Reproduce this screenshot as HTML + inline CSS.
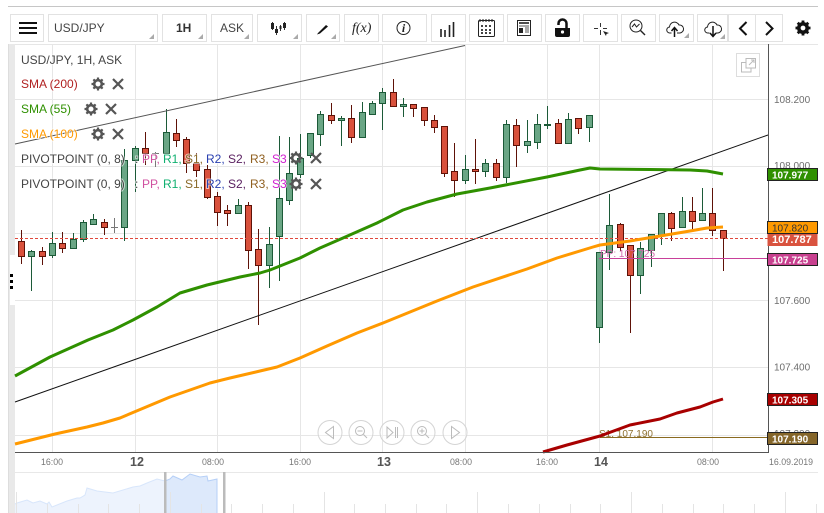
<!DOCTYPE html>
<html><head><meta charset="utf-8"><style>
html,body{margin:0;padding:0;background:#fff;width:824px;height:513px;overflow:hidden}
svg{display:block}
text{font-family:"Liberation Sans",sans-serif;font-size:12px}
.btn{fill:#fff;stroke:#e2e2e2;stroke-width:1}
.ax{fill:#6e6e6e;font-size:10px}
.v{font-size:10px}
.b{font-size:10px;font-weight:bold}
.lg{paint-order:stroke;stroke:#fff;stroke-width:2px;stroke-opacity:.6}
.xl{fill:#777;font-size:8.8px;text-anchor:middle}
.xb{fill:#555;font-size:12.5px;font-weight:bold;text-anchor:middle}
.nav{fill:#fff;fill-opacity:.35;stroke:#d4d4d4;stroke-width:1}
.ni{fill:none;stroke:#bbb;stroke-width:1}
.ma{fill:none;stroke-width:3;stroke-linejoin:round;stroke-linecap:butt}
</style></head><body>
<svg width="824" height="513" viewBox="0 0 824 513" xmlns="http://www.w3.org/2000/svg">
<rect width="824" height="513" fill="#fff"/>
<path d="M8 6.500H818" stroke="#c6c6c6" stroke-width="1"/>
<rect x="8" y="44" width="7" height="469" fill="#e9e9e9"/>
<rect x="10" y="255" width="5" height="50" fill="#fff"/>
<path d="M8.500 44V513" stroke="#ddd"/>
<rect x="10" y="274" width="3" height="3" fill="#000"/><rect x="10" y="280" width="3" height="3" fill="#000"/><rect x="10" y="286" width="3" height="3" fill="#000"/>
<path d="M15 44.500H818" stroke="#e6e6e6"/>
<path d="M52.500 44V452M135.500 44V452M217.500 44V452M300.500 44V452M382.500 44V452M465.500 44V452M547.500 44V452M599.500 44V452M712.500 44V452M15 99.500H768M15 166.500H768M15 233.500H768M15 300.500H768M15 367.500H768M15 435.500H768" stroke="#e6e6e6" stroke-width="1" fill="none"/>

<!-- green candles -->
<path stroke="#1c5a38" fill="none" d="M31.5 250V291M52.5 232V258M73.5 233V248M83.5 220V242M93.5 214V224M124.5 149V241M135.5 146V192M166.5 109V153M238.5 199V213M269.5 227V288M279.5 136V281M289.5 137V205M300.5 134V178M310.5 134V158M320.5 111V146M341.5 116V146M362.5 102V137M372.5 101V115M382.5 88V130M403.5 98V117M465.5 155V184M485.5 159V177M506.5 120V183M527.5 120V153M537.5 114V149M547.5 106V129M568.5 113V143M589.5 115V142M599.5 252V343M609.5 194V270M640.5 242V294M651.5 234V267M661.5 213V245M682.5 197V227M702.5 188V221"/>
<path stroke="#5e1208" fill="none" d="M21.5 230V264M42.5 247V265M62.5 232V253M104.5 219V235M145.5 132V165M176.5 119V147M186.5 137V173M196.5 153V177M207.5 165V199M217.5 192V226M227.5 205V226M248.5 202V269M258.5 229V325M331.5 103V124M351.5 105V143M393.5 79V107M413.5 104V117M424.5 107V126M434.5 115V133M444.5 126V177M454.5 143V197M475.5 139V184M496.5 159V181M516.5 119V167M558.5 119V143M578.5 118V134M620.5 223V251M630.5 245V333M671.5 212V241M692.5 197V229M712.5 188V236M723.5 230V271"/>
<path stroke="#777" fill="none" d="M114.5 218V233M111 227.5H118M155.5 152V167M152 153.5H159"/>
<path fill="#6aa685" stroke="#1c5a38" stroke-width="1" d="M28.5 251.5h6v5h-6zM49.5 243.5h6v12h-6zM70.5 239.5h6v9h-6zM80.5 222.5h6v17h-6zM90.5 219.5h6v5h-6zM121.5 160.5h6v67h-6zM132.5 148.5h6v12h-6zM163.5 132.5h6v21h-6zM235.5 205.5h6v8h-6zM266.5 244.5h6v21h-6zM276.5 198.5h6v38h-6zM286.5 173.5h6v27h-6zM297.5 158.5h6v16h-6zM307.5 133.5h6v22h-6zM317.5 114.5h6v20h-6zM338.5 118.5h6v2h-6zM359.5 112.5h6v25h-6zM369.5 103.5h6v11h-6zM379.5 92.5h6v11h-6zM400.5 104.5h6v2h-6zM462.5 169.5h6v11h-6zM482.5 163.5h6v8h-6zM503.5 124.5h6v53h-6zM524.5 141.5h6v4h-6zM534.5 124.5h6v18h-6zM544.5 124.5h6v1h-6zM565.5 119.5h6v24h-6zM586.5 115.5h6v12h-6zM596.5 252.5h6v75h-6zM606.5 225.5h6v27h-6zM637.5 248.5h6v27h-6zM648.5 234.5h6v16h-6zM658.5 213.5h6v22h-6zM679.5 211.5h6v16h-6zM699.5 213.5h6v7h-6z"/>
<path fill="#d9513c" stroke="#5e1208" stroke-width="1" d="M18.5 241.5h6v15h-6zM39.5 251.5h6v5h-6zM59.5 243.5h6v5h-6zM101.5 222.5h6v5h-6zM142.5 148.5h6v5h-6zM173.5 133.5h6v7h-6zM183.5 139.5h6v24h-6zM193.5 163.5h6v7h-6zM204.5 169.5h6v28h-6zM214.5 196.5h6v16h-6zM224.5 210.5h6v3h-6zM245.5 205.5h6v45h-6zM255.5 249.5h6v16h-6zM328.5 115.5h6v5h-6zM348.5 118.5h6v19h-6zM390.5 92.5h6v14h-6zM410.5 104.5h6v4h-6zM421.5 107.5h6v13h-6zM431.5 120.5h6v7h-6zM441.5 126.5h6v47h-6zM451.5 171.5h6v9h-6zM472.5 169.5h6v2h-6zM493.5 163.5h6v14h-6zM513.5 125.5h6v20h-6zM555.5 123.5h6v20h-6zM575.5 118.5h6v10h-6zM617.5 224.5h6v23h-6zM627.5 245.5h6v30h-6zM668.5 213.5h6v15h-6zM689.5 211.5h6v10h-6zM709.5 213.5h6v17h-6zM720.5 230.5h6v8h-6z"/>

<!-- trend lines -->
<path d="M15 144L465 45.500" stroke="#555" stroke-width="1" fill="none"/>
<path d="M15 402L768 135" stroke="#111" stroke-width="1" fill="none"/>
<!-- horizontal levels -->
<path d="M15 238.500H768" stroke="#e0483c" stroke-dasharray="3 2" fill="none"/>
<path d="M599 258.500H768" stroke="#c8409a" fill="none"/>
<path d="M600 437.500H768" stroke="#8a6a20" fill="none"/>
<text class="v" x="600" y="257" fill="#d466ac">PP: 107.725</text>
<text class="v" x="599" y="437" fill="#8f7233">S1: 107.190</text>
<!-- SMAs -->
<path class="ma" d="M15 376L50 357L88 340L113 330L133 320L157 307L180 293L207 285L240 277L260 273L270 270L280 266L300 258L320 248L343 238L377 223L403 210L427 202L457 194L490 188L547 177L580 170L590 168L600 169L650 169.500L690 170L707 171L723 174" stroke="#2f9000"/>
<path class="ma" d="M15 444L55 434L87 427L103 423L120 418L170 397L210 383L230 378L260 371L277 367L300 358L327 346L357 333L383 323L410 312L437 301L473 287L527 269L557 258L593 247L600 245L630 241L660 236L690 231L707 228L723 227" stroke="#ff9900"/>
<path class="ma" d="M543 452L567 445L600 436L630 425L660 419L677 413L700 407L713 402L723 399" stroke="#a80000"/>

<!-- frame axes -->
<path d="M15 452.500H769" stroke="#555"/>
<path d="M768.500 44V452" stroke="#555"/>
<path d="M15 472.500H818" stroke="#e8e8e8"/>

<!-- axis labels -->
<text class="ax" x="774" y="103">108.200</text>
<text class="ax" x="774" y="169">108.000</text>
<text class="ax" x="774" y="304">107.600</text>
<text class="ax" x="774" y="370.500">107.400</text>
<text class="ax" x="774" y="437">107.200</text>
<rect x="767.500" y="168.500" width="50" height="12" fill="#2f9000" stroke="#222"/>
<text class="b" x="772" y="178.500" fill="#fff">107.977</text>
<rect x="767.500" y="233" width="50" height="13" fill="#d9533f"/>
<text x="772" y="243" fill="#fff" style="font-size:11px;font-weight:bold">107.787</text>
<rect x="767.500" y="221.500" width="50" height="12" fill="#ff9900" stroke="#222"/>
<text class="v" x="772" y="231.500" fill="#333">107.820</text>
<rect x="767.500" y="253.500" width="50" height="12" fill="#c8408f" stroke="#222"/>
<text class="b" x="772" y="263.500" fill="#fff">107.725</text>
<rect x="767.500" y="393.500" width="50" height="12" fill="#a80000" stroke="#222"/>
<text class="b" x="772" y="403.500" fill="#fff">107.305</text>
<rect x="767.500" y="432.500" width="50" height="12" fill="#85662a" stroke="#222"/>
<text class="b" x="772" y="442.500" fill="#fff">107.190</text>

<text class="xl" x="52" y="465">16:00</text>
<text class="xb" x="137" y="466">12</text>
<text class="xl" x="213" y="465">08:00</text>
<text class="xl" x="300" y="465">16:00</text>
<text class="xb" x="384" y="466">13</text>
<text class="xl" x="461" y="465">08:00</text>
<text class="xl" x="547" y="465">16:00</text>
<text class="xb" x="601" y="466">14</text>
<text class="xl" x="708" y="465">08:00</text>
<text class="xl" x="791" y="465">16.09.2019</text>

<!-- minimap -->
<path d="M15 513V504L17 503L27 500L33 503L40 501L47 504L49 502L52 507L67 501L77 498L80 498L85 495L87 488L97 491L113 493L133 487L140 486L147 483L157 479L165 481V513Z" fill="#edf3fd" stroke="none"/>
<path d="M165 513V481L170 479L173 476L182 480L190 474L200 477L207 476L208 481L217 479V513Z" fill="#dde9fb"/>
<path d="M15 504L17 503L27 500L33 503L40 501L47 504L49 502L52 507L67 501L77 498L80 498L85 495L87 488L97 491L113 493L133 487L140 486L147 483L157 479L165 481" fill="none" stroke="#d8e6fb"/>
<path d="M165 481L170 479L173 476L182 480L190 474L200 477L207 476L208 481L217 479V513" fill="none" stroke="#b5cff7"/>
<path stroke="#e4e4e4" fill="none" d="M16.500 492V513M47.500 504V513M78.500 504V513M108.500 504V513M139.500 504V513M170.500 492V513M201.500 504V513M231.500 504V513M262.500 504V513M293.500 504V513M324.500 492V513M354.500 504V513M385.500 504V513M416.500 504V513M446.500 504V513M477.500 492V513M508.500 504V513M539.500 504V513M570.500 504V513M600.500 504V513M631.500 492V513M662.500 504V513M693.500 504V513M723.500 504V513M754.500 504V513M785.500 492V513M816.500 504V513"/>
<rect x="164" y="472" width="2.500" height="41" fill="#bbb"/>
<rect x="223" y="472" width="2.500" height="41" fill="#bbb"/>

<!-- nav -->
<circle class="nav" cx="330" cy="432.500" r="12"/><path class="ni" d="M333.500 426.500V438.500L325.500 432.500Z"/>
<circle class="nav" cx="361" cy="432.500" r="12"/><circle class="ni" cx="360" cy="431" r="4.500"/><path class="ni" d="M357.500 431H362.500M363.500 434.500L367 438"/>
<circle class="nav" cx="392" cy="432.500" r="12"/><path class="ni" d="M387 427V438L393 432.500ZM395.500 427V438M397.500 427V438"/>
<circle class="nav" cx="423" cy="432.500" r="12"/><circle class="ni" cx="422" cy="431" r="4.500"/><path class="ni" d="M419.500 431H424.500M422 428.500V433.500M425.500 434.500L429 438"/>
<circle class="nav" cx="455" cy="432.500" r="12"/><path class="ni" d="M451.500 426.500V438.500L459.500 432.500Z"/>

<!-- fullscreen -->
<rect x="736.500" y="53.500" width="23" height="23" fill="#fff" stroke="#ddd"/>
<path d="M746 58.500H755.500V68H746ZM746 62.500H741.500V72H751V68M749 65L754 60M751 60H754V63" fill="none" stroke="#bbb"/>

<!-- legend -->
<text class="lg" x="21" y="64" fill="#444">USD/JPY, 1H, ASK</text>
<text class="lg" x="21" y="88" fill="#b02020">SMA (200)</text>
<text class="lg" x="21" y="113" fill="#2f9000">SMA (55)</text>
<text class="lg" x="21" y="138" fill="#ff9900">SMA (100)</text>
<text class="lg" x="21" y="163" fill="#444">PIVOTPOINT (0, 8)</text>
<text class="lg" x="21" y="188" fill="#444">PIVOTPOINT (0, 9)</text>
<text class="lg" x="135" y="163" fill="#444">:</text><text class="lg" x="142" y="163" fill="#d050a0">PP,</text><text class="lg" x="163" y="163" fill="#10b070">R1,</text><text class="lg" x="185" y="163" fill="#8a6a2a">S1,</text><text class="lg" x="206" y="163" fill="#2a40b0">R2,</text><text class="lg" x="228" y="163" fill="#5a2060">S2,</text><text class="lg" x="250" y="163" fill="#906020">R3,</text><text class="lg" x="272" y="163" fill="#d020d0">S3</text>
<text class="lg" x="135" y="188" fill="#444">:</text><text class="lg" x="142" y="188" fill="#d050a0">PP,</text><text class="lg" x="163" y="188" fill="#10b070">R1,</text><text class="lg" x="185" y="188" fill="#8a6a2a">S1,</text><text class="lg" x="206" y="188" fill="#2a40b0">R2,</text><text class="lg" x="228" y="188" fill="#5a2060">S2,</text><text class="lg" x="250" y="188" fill="#906020">R3,</text><text class="lg" x="272" y="188" fill="#d020d0">S3</text>
<defs>
<g id="g"><circle r="3.800" fill="none" stroke="#555" stroke-width="2.600"/><path d="M0-6.500V-4.500M0 4.500V6.500M-6.500 0H-4.500M4.500 0H6.500M-4.600-4.600L-3.200-3.200M3.200 3.200L4.600 4.600M-4.600 4.600L-3.200 3.200M3.200-3.200L4.600-4.600" stroke="#555" stroke-width="2.200"/></g>
<path id="c" d="M-5-5L5 5M5-5L-5 5" stroke="#555" stroke-width="2.200" fill="none"/>
<path id="t" d="M5 0V5H0Z" fill="#aaa"/>
</defs>
<use href="#g" x="98" y="84"/><use href="#c" x="118" y="84"/>
<use href="#g" x="91" y="109"/><use href="#c" x="111" y="109"/>
<use href="#g" x="98" y="134"/><use href="#c" x="118" y="134"/>
<use href="#g" x="296" y="158"/><use href="#c" x="316" y="158"/>
<use href="#g" x="296" y="184"/><use href="#c" x="316" y="184"/>

<!-- toolbar -->
<rect class="btn" x="10.500" y="14.500" width="33" height="27"/>
<path d="M19 23H37M19 28H37M19 33H37" stroke="#111" stroke-width="2"/>
<rect class="btn" x="48.500" y="14.500" width="109" height="27"/>
<text x="54" y="32" fill="#444">USD/JPY</text><use href="#t" x="149" y="34"/>
<rect class="btn" x="162.500" y="14.500" width="44" height="27"/>
<text x="176" y="32" fill="#333" style="font-weight:bold">1H</text><use href="#t" x="198" y="34"/>
<rect class="btn" x="211.500" y="14.500" width="41" height="27"/>
<text x="220" y="32" fill="#444">ASK</text><use href="#t" x="244" y="34"/>
<rect class="btn" x="257.500" y="14.500" width="44" height="27"/>
<path d="M272.500 22V30M276.500 26V35M280.500 25V31M284.500 22V30" stroke="#333" stroke-width="1"/>
<path d="M271 23h3v6h-3zM275 29h3v4h-3zM279.500 26h2v3h-2zM283 23h3v5h-3z" fill="#222"/><use href="#t" x="293" y="34"/>
<rect class="btn" x="306.500" y="14.500" width="33" height="27"/>
<path d="M318 33L326 25L328 26.500L320 33.500L317 34.500Z" fill="#111"/><use href="#t" x="331" y="34"/>
<rect class="btn" x="344.500" y="14.500" width="34" height="27"/>
<text x="352" y="32" fill="#222" style="font-family:'Liberation Serif',serif;font-style:italic;font-size:14px">f(x)</text>
<rect class="btn" x="382.500" y="14.500" width="44" height="27"/>
<circle cx="403.500" cy="28" r="6.500" fill="none" stroke="#222"/>
<text x="403.500" y="32" fill="#222" text-anchor="middle" style="font-family:'Liberation Serif',serif;font-style:italic;font-size:12px;font-weight:bold">i</text>
<rect class="btn" x="431.500" y="14.500" width="34" height="27"/>
<path d="M441 29V37M445 30V37M449.500 25V37M453.500 22V37" stroke="#222" stroke-width="1.600"/>
<rect class="btn" x="469.500" y="14.500" width="34" height="27"/>
<rect x="478.500" y="20.500" width="16" height="16" rx="1" fill="none" stroke="#222"/>
<path d="M480 19V22M483 19V22M486 19V22M489 19V22M492 19V22" stroke="#222"/>
<path d="M481 25h2v2h-2zM485 25h2v2h-2zM489 25h2v2h-2zM481 29h2v2h-2zM485 29h2v2h-2zM489 29h2v2h-2zM481 32h2v2h-2zM485 32h2v2h-2zM489 32h2v2h-2z" fill="#444"/>
<rect class="btn" x="507.500" y="14.500" width="34" height="27"/>
<rect x="517.500" y="20.500" width="13" height="15" fill="none" stroke="#222"/>
<path d="M519 23H529" stroke="#222" stroke-width="1.600"/><path d="M519 26H529M525 28H529M525 30H529M525 32H529" stroke="#555"/>
<path d="M519 28h4v5h-4z" fill="#222"/>
<rect class="btn" x="545.500" y="14.500" width="34" height="27"/>
<path d="M555 28h15v7a2 2 0 0 1-2 2h-11a2 2 0 0 1-2-2z" fill="#111"/>
<path d="M558.500 23.500a4 4 0 0 1 8 0V28" fill="none" stroke="#111" stroke-width="2.500"/>
<path d="M558.500 23.500V25" stroke="#111" stroke-width="2.500"/>
<circle cx="562.500" cy="32" r="1.600" fill="#fff"/>
<rect class="btn" x="583.500" y="14.500" width="34" height="27"/>
<path d="M600.500 23V27M600.500 30V35M594 28.500H598M603 28.500H607" stroke="#333"/>
<path d="M603 31L609 33L606.500 34L606 36Z" fill="#222"/>
<rect class="btn" x="621.500" y="14.500" width="34" height="27"/>
<circle cx="636" cy="26" r="6" fill="none" stroke="#222"/>
<path d="M640.500 30.500L645 35" stroke="#222" stroke-width="1.400"/><path d="M632 27L634.500 24L636.500 27L639.500 24" fill="none" stroke="#222"/>
<rect class="btn" x="659.500" y="14.500" width="34" height="27"/>
<path d="M671.500 33H670a3 3 0 0 1-.5-6a5 5 0 0 1 9.500-2a4 4 0 0 1 1 8H677" fill="none" stroke="#222"/>
<path d="M674.500 37V28M671.500 31L674.500 27.500L677.500 31" fill="none" stroke="#111" stroke-width="1.500"/><use href="#t" x="684" y="33"/>
<rect class="btn" x="697.500" y="14.500" width="30" height="27"/>
<path d="M709.500 33H708a3 3 0 0 1-.5-6a5 5 0 0 1 9.500-2a4 4 0 0 1 1 8H716" fill="none" stroke="#222"/>
<path d="M713 26V36M710 33L713 36.500L716 33" fill="none" stroke="#111" stroke-width="1.500"/><use href="#t" x="720" y="34"/>
<rect class="btn" x="728.500" y="14.500" width="27" height="27"/>
<rect class="btn" x="755.500" y="14.500" width="27" height="27"/>
<path d="M746.500 22L740 28.500L746.500 35" fill="none" stroke="#111" stroke-width="2"/>
<path d="M766 22L772.500 28.500L766 35" fill="none" stroke="#111" stroke-width="2"/>
<circle cx="803" cy="28" r="4.200" fill="none" stroke="#111" stroke-width="3.600"/>
<path d="M803 20.500V23.500M803 32.500V35.500M795.500 28H798.500M807.500 28H810.500M797.700 22.700L799.800 24.800M806.200 31.200L808.300 33.300M797.700 33.300L799.800 31.200M806.200 24.800L808.300 22.700" stroke="#111" stroke-width="2.800"/>
</svg>
</body></html>
